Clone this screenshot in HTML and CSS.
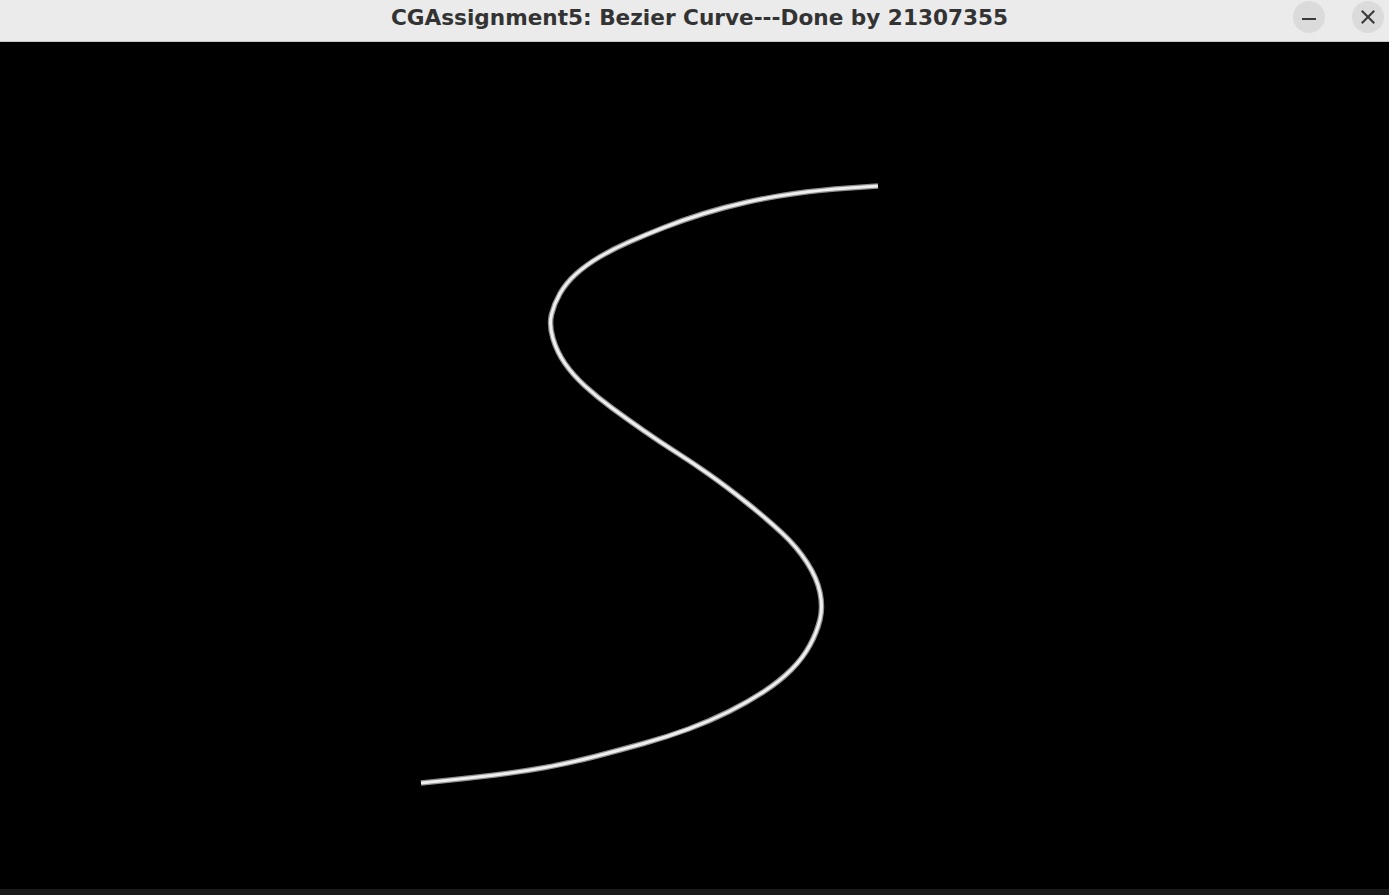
FILE: index.html
```html
<!DOCTYPE html>
<html lang="en">
<head>
<meta charset="utf-8">
<title>CGAssignment5: Bezier Curve---Done by 21307355</title>
<link rel="stylesheet" href="styles.css">
</head>
<body>
<div class="window">
  <header class="titlebar">
    <div class="title">CGAssignment5: Bezier Curve---Done by 21307355</div>
    <div class="controls">
      <button class="wbtn" aria-label="Minimize">
        <svg width="16" height="16" viewBox="0 0 16 16"><rect x="1" y="9" width="14" height="2" fill="#3a3a3a"/></svg>
      </button>
      <button class="wbtn" aria-label="Close">
        <svg width="16" height="16" viewBox="0 0 16 16"><path d="M2.5 2.5 L13.5 13.5 M13.5 2.5 L2.5 13.5" stroke="#3a3a3a" stroke-width="2.1" stroke-linecap="square" fill="none"/></svg>
      </button>
    </div>
  </header>
  <main class="canvas">
    <svg class="curve" width="1389" height="847" viewBox="0 42 1389 847">
      <path class="stroke-outer" d="M421 783 L445.5 780.5 Q470 778 495 775 Q520 772 545 767.5 Q570 763 595 756.5 Q620 750 643.5 743.5 Q667 737 688.5 729 Q710 721 729 711.5 Q748 702 764 691.5 Q780 681 791.5 669.5 Q803 658 810 645 Q817 632 820 619.5 Q823 607 820 592.5 Q817 578 807 562.5 Q797 547 782 533 Q767 519 747 503 Q727 487 710 475 Q693 463 676.5 452.5 Q660 442 643.5 430.5 Q627 419 612 408 Q597 397 585 386 Q573 375 565 363.5 Q557 352 553 338.5 Q549 325 551.5 314.5 Q554 304 560 293.5 Q566 283 576 274 Q586 265 599.5 257 Q613 249 629 242 Q645 235 664 227.5 Q683 220 704 213.5 Q725 207 747.5 202 Q770 197 795 193.5 Q820 190 849 188 L878 186"/>
      <path class="stroke-inner" d="M421 783 L445.5 780.5 Q470 778 495 775 Q520 772 545 767.5 Q570 763 595 756.5 Q620 750 643.5 743.5 Q667 737 688.5 729 Q710 721 729 711.5 Q748 702 764 691.5 Q780 681 791.5 669.5 Q803 658 810 645 Q817 632 820 619.5 Q823 607 820 592.5 Q817 578 807 562.5 Q797 547 782 533 Q767 519 747 503 Q727 487 710 475 Q693 463 676.5 452.5 Q660 442 643.5 430.5 Q627 419 612 408 Q597 397 585 386 Q573 375 565 363.5 Q557 352 553 338.5 Q549 325 551.5 314.5 Q554 304 560 293.5 Q566 283 576 274 Q586 265 599.5 257 Q613 249 629 242 Q645 235 664 227.5 Q683 220 704 213.5 Q725 207 747.5 202 Q770 197 795 193.5 Q820 190 849 188 L878 186"/>
    </svg>
  </main>
  <footer class="bottombar"></footer>
</div>
</body>
</html>
```

FILE: styles.css
```css
html, body {
  margin: 0;
  padding: 0;
  background: #000;
}

.window {
  width: 1389px;
  height: 895px;
  display: flex;
  flex-direction: column;
  overflow: hidden;
}

.titlebar {
  position: relative;
  height: 41px;
  flex: 0 0 41px;
  background: #ebebeb;
  border-bottom: 1px solid #c6c6c6;
  display: flex;
  align-items: center;
  justify-content: center;
  padding-left: 10px;
  box-sizing: content-box;
}

.title {
  font-family: "DejaVu Sans", "Open Sans", sans-serif;
  font-weight: 700;
  font-size: 21.6px;
  color: #333333;
  letter-spacing: 0px;
  line-height: 1;
  margin-top: -5px;
  white-space: nowrap;
}

.controls {
  position: absolute;
  right: 5px;
  top: 1px;
  display: flex;
  gap: 27px;
}

.wbtn {
  width: 32px;
  height: 32px;
  border-radius: 50%;
  border: none;
  padding: 0;
  margin: 0;
  background: #dbdbdb;
  display: flex;
  align-items: center;
  justify-content: center;
}

.canvas {
  flex: 1 1 auto;
  background: #000;
  display: flex;
  overflow: hidden;
}

.curve {
  display: block;
}

.stroke-outer {
  fill: none;
  stroke: #8e8e8e;
  stroke-width: 5.5;
  stroke-linecap: butt;
  stroke-linejoin: round;
}

.stroke-inner {
  fill: none;
  stroke: #eeeeee;
  stroke-width: 3;
  stroke-linecap: butt;
  stroke-linejoin: round;
}

.bottombar {
  flex: 0 0 6px;
  height: 6px;
  background: #1a1a1a;
}
```
